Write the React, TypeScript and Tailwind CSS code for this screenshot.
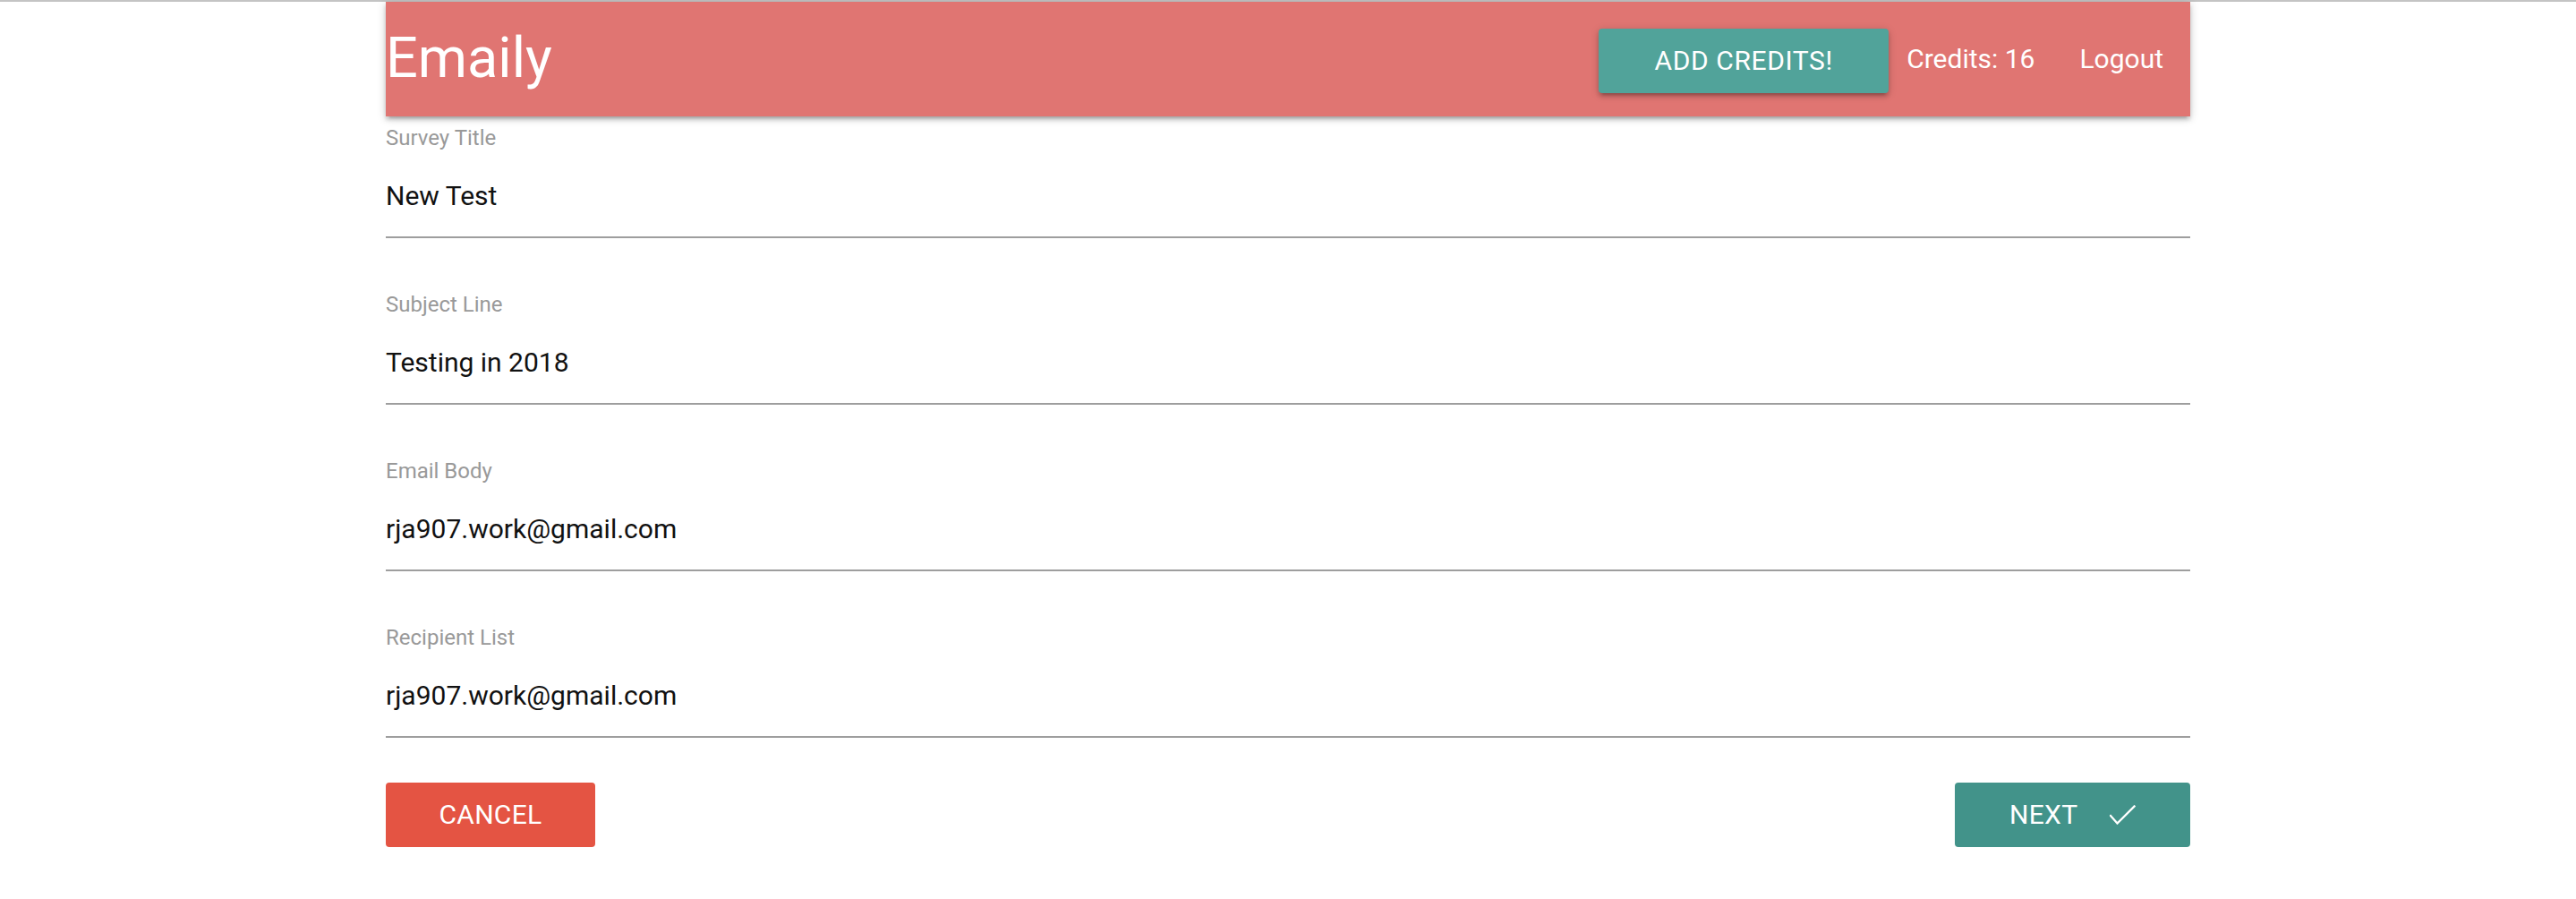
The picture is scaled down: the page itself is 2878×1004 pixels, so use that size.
import React from "react";

const fields = [
  { label: "Survey Title", value: "New Test" },
  { label: "Subject Line", value: "Testing in 2018" },
  { label: "Email Body", value: "rja907.work@gmail.com" },
  { label: "Recipient List", value: "rja907.work@gmail.com" },
];

function Field({ label, value }: { label: string; value: string }) {
  return (
    <div className="flex flex-col border-b-2 border-[#9e9e9e]">
      <label className="h-[24px] text-[24px] leading-[24px] text-[#999999]">{label}</label>
      <div className="mt-[38px] mb-[30px] h-[30px] text-[30px] leading-[30px] text-[#111111]">{value}</div>
    </div>
  );
}

export default function App() {
  return (
    <div className="min-h-[1004px] w-full bg-white font-['Roboto',_'Liberation_Sans',_sans-serif]">
      <div className="h-[2px] bg-[#c4c4c4]" />
      <div className="mx-auto w-[2016px]">
        <nav className="flex h-[128px] items-center justify-between bg-[#e07572] text-white shadow-[0_4px_4px_0_rgba(0,0,0,0.14),0_6px_2px_-4px_rgba(0,0,0,0.12),0_2px_10px_0_rgba(0,0,0,0.2)]">
          <span className="mb-[3px] text-[63px] leading-[63px]">Emaily</span>
          <ul className="flex items-center text-[30px] leading-[30px]">
            <li>
              <button className="mt-[4px] flex h-[72px] w-[324px] items-center justify-center rounded-[4px] bg-[#51a39a] text-[30px] leading-[72px] tracking-[0.6px] text-white uppercase shadow-[0_4px_4px_0_rgba(0,0,0,0.14),0_6px_2px_-4px_rgba(0,0,0,0.12),0_2px_10px_0_rgba(0,0,0,0.2)]">
                Add Credits!
              </button>
            </li>
            <li className="mx-[20px]">Credits: 16</li>
            <li className="px-[30px]">Logout</li>
          </ul>
        </nav>
        <form className="flex flex-col pt-[12px]">
          <div className="flex flex-col gap-[62px]">
            {fields.map((f) => (
              <Field key={f.label} label={f.label} value={f.value} />
            ))}
          </div>
          <div className="mt-[50px] flex items-center justify-between">
            <button
              type="button"
              className="h-[72px] w-[234px] rounded-[4px] bg-[#e45443] text-[30px] leading-[72px] tracking-[0.3px] text-white uppercase"
            >
              Cancel
            </button>
            <button
              type="button"
              className="flex h-[72px] w-[263px] items-center rounded-[4px] bg-[#42938a] pl-[61px] text-[30px] leading-[72px] tracking-[0.3px] text-white uppercase"
            >
              <span>Next</span>
              <svg
                className="ml-[36px] h-[22px] w-[29px]"
                viewBox="0 0 29 22"
                fill="none"
                stroke="white"
                strokeWidth="2.3"
                strokeLinecap="square"
              >
                <path d="M1 12 L8.5 20.5 L27.5 1.5" />
              </svg>
            </button>
          </div>
        </form>
      </div>
    </div>
  );
}
